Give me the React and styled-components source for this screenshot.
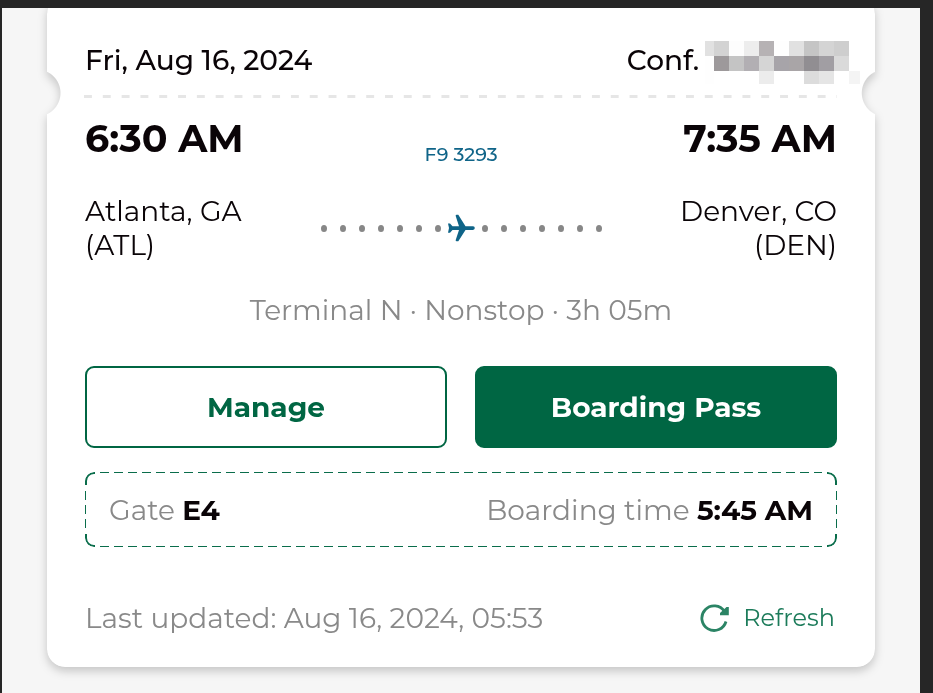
import styled, { createGlobalStyle } from "styled-components";

const GlobalStyle = createGlobalStyle`
	* {
		box-sizing: border-box;
	}

	body {
		margin: 0;
		background: #262626;
		color: #0a0407;
		font-family: Montserrat, Inter, "Liberation Sans", sans-serif;
		font-size: 28px;
		line-height: 34px;
	}

	button {
		font: inherit;
		cursor: pointer;
	}
`;

const Frame = styled.div`
	display: flex;
	min-height: 100vh;
	padding: 8px 13px 0 2px;
`;

const Screen = styled.main`
	flex: 1;
	padding: 0 45px 26px;
	overflow: hidden;
	background: #f6f6f6;
`;

const CardShadow = styled.div`
	margin-top: -12px;
	filter: drop-shadow(0 4px 5px rgba(0, 0, 0, 0.2));
`;

const Card = styled.article`
	padding: 47px 38px 32px;
	border-radius: 18px;
	background: #fff;
	mask:
		radial-gradient(circle at -10px 97px, transparent 23px, #000 24px) left / 51% 100% no-repeat,
		radial-gradient(circle at calc(100% + 10px) 97px, transparent 23px, #000 24px) right / 51% 100% no-repeat;
`;

const Row = styled.div`
	display: flex;
	justify-content: space-between;
	align-items: center;
`;

const Header = styled(Row)`
	align-items: flex-start;
	font-weight: 500;
`;

const Confirmation = styled.div`
	display: flex;
	gap: 6px;
	margin-right: -23px;
`;

const Mosaic = styled.div`
	display: grid;
	grid-template-columns: 9px repeat(9, 15px) 11px;
	grid-template-rows: 15px 15px 13px;
	margin: -2px 0 -7px;
`;

const Tile = styled.span`
	background: ${({ $color }) => $color};
`;

const Divider = styled.hr`
	height: 3px;
	margin: 18px 0 23px -1px;
	border: 0;
	background: linear-gradient(90deg, #e6e6e6 8px, transparent 8px) 0 0 / 2.5% 100%;
`;

const Times = styled.div`
	display: grid;
	grid-template-columns: 1fr auto 1fr;
`;

const Time = styled.strong`
	font-size: 38px;
	font-weight: 700;
	line-height: 36px;
	text-align: ${({ $end }) => ($end ? "right" : "left")};
`;

const FlightNumber = styled.a`
	padding-top: 23px;
	color: #0f6488;
	font-size: 19px;
	font-weight: 500;
	line-height: 22px;
	text-decoration: none;
`;

const Cities = styled(Row)`
	margin-top: 28px;
`;

const City = styled.div`
	width: 180px;
	text-align: ${({ $end }) => ($end ? "right" : "left")};
`;

const Route = styled.div`
	display: flex;
	align-items: center;
	gap: 7px;
`;

const Dots = styled.div`
	display: flex;
	gap: 13px;
`;

const Dot = styled.span`
	width: 6px;
	height: 7px;
	border-radius: 50%;
	background: #878787;
`;

const Summary = styled.p`
	margin: 31px 0 39px;
	color: #898989;
	text-align: center;
`;

const Actions = styled.div`
	display: grid;
	grid-template-columns: 1fr 1fr;
	gap: 28px;
`;

const Button = styled.button`
	height: 82px;
	border: 2px solid #006643;
	border-radius: 9px;
	background: ${({ $filled }) => ($filled ? "#006643" : "#fff")};
	color: ${({ $filled }) => ($filled ? "#fff" : "#006643")};
	font-weight: 700;
`;

const GateBox = styled.div`
	position: relative;
	display: flex;
	justify-content: space-between;
	margin-top: 24px;
	padding: 21px 24px 20px;

	&::before,
	&::after {
		content: "";
		position: absolute;
		inset: 0;
		border: 1px solid #0a6d4b;
		border-radius: 9px;
		mask:
			repeating-linear-gradient(90deg, #000 0 9px, transparent 9px 14px) center / calc(100% - 30px) 100% no-repeat,
			repeating-linear-gradient(#000 0 9px, transparent 9px 14px) center / 100% calc(100% - 38px) no-repeat;
	}

	/* heavier corner pieces */
	&::after {
		border-width: 2px;
		mask:
			linear-gradient(#000, #000) 0 0 / 10px 13px no-repeat,
			linear-gradient(#000, #000) 100% 0 / 10px 13px no-repeat,
			linear-gradient(#000, #000) 0 100% / 10px 13px no-repeat,
			linear-gradient(#000, #000) 100% 100% / 10px 13px no-repeat;
	}
`;

const Detail = styled.span`
	color: #898989;

	strong {
		color: #0a0407;
		font-weight: 700;
	}
`;

const Footer = styled(Row)`
	margin-top: 54px;
`;

const RefreshButton = styled.button`
	display: flex;
	align-items: center;
	gap: 14px;
	padding: 0 2px 0 0;
	border: 0;
	background: none;
	color: #1c7b5a;

	span {
		font-size: 24px;
	}
`;

const TILES = [
	["#e1e1e1", "#d3d3d3", "#fdfdfd", "#ededed", "#b6b2b4", "#fefefe", "#e1e1e1", "#c5c5c5", "#d4d4d4", "#cecece", "#fff"],
	["#fefefe", "#9d999b", "#c4c4c4", "#b2afb3", "#d5d5d5", "#a7a4a9", "#a9a5a7", "#918e92", "#a19ea3", "#dadada", "#fff"],
	["#fefefe", "#fff", "#fff", "#fff", "#ececec", "#fff", "#fff", "#dcdcdc", "#e5e5e5", "#fff", "#f4f4f4"],
];

function DotLine() {
	return (
		<Dots>
			{Array.from({ length: 7 }, (_, i) => (
				<Dot key={i} />
			))}
		</Dots>
	);
}

function PlaneIcon() {
	return (
		<svg width="27" height="28" viewBox="0 0 27 28" fill="#0f6488" aria-hidden="true">
			<path d="M0 9.500h2l2.500 2.800H11L7.700 2q-.3-1.200 1-1.200h1.600L17.500 12.300h7.500a1.800 1.800 0 0 1 0 3.600h-7.500L10.300 27.200H8.700q-1.300 0-1-1.200L11 15.900H4.500L2 18.700H0l1-4.600z" />
		</svg>
	);
}

function RefreshIcon() {
	return (
		<svg width="29" height="28" viewBox="0 0 29 28" fill="none" aria-hidden="true">
			<path d="M26 17.500A12.300 12.300 0 1 1 24.500 7.500" stroke="#2b8465" strokeWidth="2.800" />
			<path d="M26.500 3h2.300v8.200H20V9z" fill="#2b8465" />
		</svg>
	);
}

function App() {
	return (
		<Frame>
			<GlobalStyle />
			<Screen>
				<CardShadow>
					<Card>
						<Header>
							<span>Fri, Aug 16, 2024</span>
							<Confirmation>
								<span>Conf.</span>
								<Mosaic>
									{TILES.flat().map((color, i) => (
										<Tile key={i} $color={color} />
									))}
								</Mosaic>
							</Confirmation>
						</Header>
						<Divider />
						<Times>
							<Time>6:30 AM</Time>
							<FlightNumber href="#flight">F9 3293</FlightNumber>
							<Time $end>7:35 AM</Time>
						</Times>
						<Cities>
							<City>
								Atlanta, GA
								<br />
								(ATL)
							</City>
							<Route>
								<DotLine />
								<PlaneIcon />
								<DotLine />
							</Route>
							<City $end>
								Denver, CO
								<br />
								(DEN)
							</City>
						</Cities>
						<Summary>Terminal N · Nonstop · 3h 05m</Summary>
						<Actions>
							<Button type="button">Manage</Button>
							<Button type="button" $filled>
								Boarding Pass
							</Button>
						</Actions>
						<GateBox>
							<Detail>
								Gate <strong>E4</strong>
							</Detail>
							<Detail>
								Boarding time <strong>5:45 AM</strong>
							</Detail>
						</GateBox>
						<Footer>
							<Detail>Last updated: Aug 16, 2024, 05:53</Detail>
							<RefreshButton type="button">
								<RefreshIcon />
								<span>Refresh</span>
							</RefreshButton>
						</Footer>
					</Card>
				</CardShadow>
			</Screen>
		</Frame>
	);
}

export default App;
